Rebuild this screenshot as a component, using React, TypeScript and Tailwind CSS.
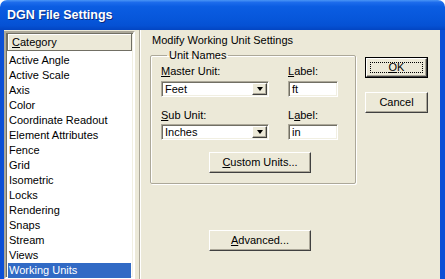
import React from "react";

const categories = [
  "Active Angle",
  "Active Scale",
  "Axis",
  "Color",
  "Coordinate Readout",
  "Element Attributes",
  "Fence",
  "Grid",
  "Isometric",
  "Locks",
  "Rendering",
  "Snaps",
  "Stream",
  "Views",
  "Working Units",
];

const sunken =
  "border border-t-[#aca899] border-l-[#aca899] border-r-white border-b-white shadow-[inset_1px_1px_0_#716f64,inset_-1px_-1px_0_#f1efe2]";

const raised =
  "border border-t-white border-l-white border-r-[#404040] border-b-[#404040] shadow-[inset_-1px_-1px_0_#aca899]";

const Combo = ({ value }: { value: string }) => (
  <div className={`flex h-[16px] w-[108px] bg-white ${sunken}`}>
    <div className="flex-1 pl-[3px] leading-[14px]">{value}</div>
    <div className={`my-[1px] mr-[1px] flex w-[15px] items-center justify-center bg-[#ece9d8] ${raised}`}>
      <div className="h-0 w-0 border-x-[3.5px] border-t-[4px] border-x-transparent border-t-black" />
    </div>
  </div>
);

const TextBox = ({ value }: { value: string }) => (
  <div className={`h-[16px] w-[50px] bg-white pl-[3px] leading-[14px] ${sunken}`}>{value}</div>
);

const Button = ({ children, className = "" }: { children: React.ReactNode; className?: string }) => (
  <div className={`flex h-[21px] items-center justify-center bg-[#ece9d8] ${raised} ${className}`}>
    {children}
  </div>
);

export default function App() {
  return (
    <div className="flex h-[279px] w-[445px] flex-col overflow-hidden bg-white font-['Liberation_Sans',Arial,sans-serif] text-[11px] text-black">
      <div className="flex h-[30px] shrink-0 items-center rounded-t-[7px] bg-[linear-gradient(to_bottom,#4a95f5_0%,#1d6cec_8%,#0b5de2_22%,#0757db_60%,#0551d4_85%,#0345c2_100%)] pl-[7px]">
        <span className="text-[12.5px] font-bold text-white [text-shadow:1px_1px_0_#0a2a80]">
          DGN File Settings
        </span>
      </div>

      <div className="flex min-h-0 flex-1 border-l-[4px] border-r-[5px] border-[#0b4fd6] bg-[#ece9d8]">
        {/* category list */}
        <div className={`mt-[1px] w-[131px] shrink-0 bg-white ${sunken} border-[2px]`}>
          <div className="mx-[1px] flex h-[18px] items-center border border-[#716f64] bg-[#ece9d8] pl-[4px] shadow-[inset_1px_1px_0_white]">
            <span>
              <u>C</u>ategory
            </span>
          </div>
          <div className="mt-[2px]">
            {categories.map((c) => (
              <div
                key={c}
                className={`mx-[2px] h-[15px] pl-[1px] leading-[15px] ${
                  c === "Working Units" ? "bg-[#316ac5] text-white" : ""
                }`}
              >
                {c}
              </div>
            ))}
          </div>
        </div>

        {/* settings panel */}
        <div className="ml-[4px] flex flex-1 border-l border-l-[#aca899] shadow-[inset_1px_0_0_white]">
          <div className="w-[217px] shrink-0 pl-[10px]">
            <div className="pl-[2px] pt-[4px] leading-[13px]">Modify Working Unit Settings</div>

            <fieldset className="mt-[2px] h-[135px] w-[206px] rounded-[2px] border border-[#aca899] pl-[10px] shadow-[inset_1px_1px_0_white,1px_1px_0_white]">
              <legend className="ml-[6px] px-[2px] leading-[13px]">Unit Names</legend>

              <div className="mt-[3px] flex gap-[19px]">
                <div className="flex flex-col">
                  <div className="leading-[13px]">
                    <u>M</u>aster Unit:
                  </div>
                  <div className="mt-[3px]">
                    <Combo value="Feet" />
                  </div>
                </div>
                <div className="flex flex-col">
                  <div className="leading-[13px]">
                    <u>L</u>abel:
                  </div>
                  <div className="mt-[3px]">
                    <TextBox value="ft" />
                  </div>
                </div>
              </div>

              <div className="mt-[12px] flex gap-[19px]">
                <div className="flex flex-col">
                  <div className="leading-[13px]">
                    <u>S</u>ub Unit:
                  </div>
                  <div className="mt-[2px]">
                    <Combo value="Inches" />
                  </div>
                </div>
                <div className="flex flex-col">
                  <div className="leading-[13px]">
                    L<u>a</u>bel:
                  </div>
                  <div className="mt-[2px]">
                    <TextBox value="in" />
                  </div>
                </div>
              </div>

              <Button className="ml-[48px] mt-[12px] w-[102px]">
                <span>
                  <u>C</u>ustom Units...
                </span>
              </Button>
            </fieldset>

            <Button className="ml-[59px] mt-[46px] w-[102px]">
              <span>
                <u>A</u>dvanced...
              </span>
            </Button>
          </div>

          <div className="ml-[8px] flex flex-col">
            <div className="mt-[27px] h-[21px] w-[63px] border border-black">
              <div className={`flex h-full items-center justify-center bg-[#ece9d8] p-[3px] ${raised}`}>
                <div className="flex h-full w-full items-center justify-center border border-dotted border-black">
                  <span>
                    <u>O</u>K
                  </span>
                </div>
              </div>
            </div>
            <Button className="mt-[14px] w-[63px]">Cancel</Button>
          </div>
        </div>
      </div>
    </div>
  );
}
